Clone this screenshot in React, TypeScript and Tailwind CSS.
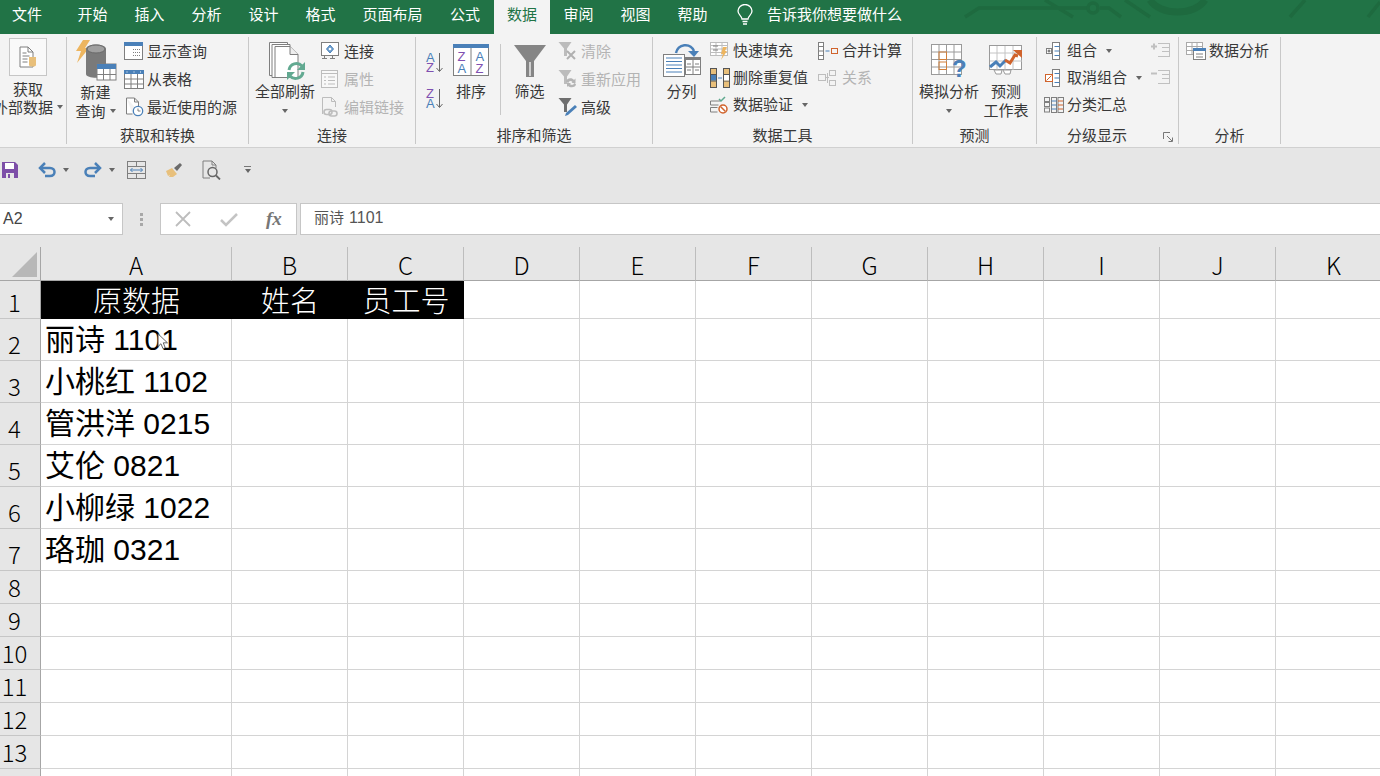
import type { ReactNode } from "react";

const G = "#7f7f7f";
const B = "#4a80b8";
const L = "#bdbdbd";

const tabs = [
  { t: "文件", w: "w-[54px] mr-[10px]" },
  { t: "开始", w: "w-[57px]" },
  { t: "插入", w: "w-[57px]" },
  { t: "分析", w: "w-[57px]" },
  { t: "设计", w: "w-[57px]" },
  { t: "格式", w: "w-[57px]" },
  { t: "页面布局", w: "w-[87px]" },
  { t: "公式", w: "w-[58px]" },
];
const tabs2 = ["审阅", "视图", "帮助"];
const cols = ["B", "C", "D", "E", "F", "G", "H", "I", "J", "K"];
const sheet = ["丽诗 1101", "小桃红 1102", "管洪洋 0215", "艾伦 0821", "小柳绿 1022", "珞珈 0321"];

function Caret() {
  return <span className="inline-block w-0 h-0 border-x-[3.5px] border-t-[4px] border-x-transparent border-t-[#666]" />;
}

function Row({ icon, text, off, caret, col = "w-[23px]", h = "h-[28px]", gap = "ml-[9px]" }: { icon: ReactNode; text: string; off?: boolean; caret?: boolean; col?: string; h?: string; gap?: string }) {
  return (
    <div className={`flex items-center whitespace-nowrap ${h} ${off ? "text-[#b4b4b4]" : ""}`}>
      <span className={`${col} flex items-center`}>{icon}</span>
      <span>{text}</span>
      {caret && <span className={`${gap} flex`}><Caret /></span>}
    </div>
  );
}

function Big({ icon, lines, caret, w, iconPad = "" }: { icon: ReactNode; lines: string[]; caret?: boolean; w: string; iconPad?: string }) {
  return (
    <div className={`${w} flex flex-col items-center whitespace-nowrap leading-[19px]`}>
      <div className={`h-[44px] w-full flex justify-center items-start ${iconPad}`}>{icon}</div>
      {lines.map((l) => <div key={l}>{l}</div>)}
      {caret && <div className="h-[21px] flex items-center"><Caret /></div>}
    </div>
  );
}

function Group({ w, label, children, launcher }: { w: string; label: string; children: ReactNode; launcher?: boolean }) {
  return (
    <div className={`${w} shrink-0 h-[107px] border-r border-[#c8c8c8] flex flex-col overflow-hidden`}>
      <div className="h-[89px] flex">{children}</div>
      {launcher ? (
        <div className="h-[18px] flex items-center">
          <div className="w-[120px] text-center leading-[18px]">{label}</div>
          <svg className="ml-[6px] mt-[4px]" width="10" height="10" viewBox="0 0 10 10" fill="none" stroke="#777"><path d="M.5 7V.5H7M4 4l5 5M5.500 9.500h4v-4" /></svg>
        </div>
      ) : (
        <div className="h-[18px] text-center leading-[18px]">{label}</div>
      )}
    </div>
  );
}

function MiniTable({ head = B, color = G }: { head?: string; color?: string }) {
  return (
    <svg width="20" height="19" viewBox="0 0 20 19" fill="#fff" stroke={color}>
      <rect x=".5" y=".5" width="19" height="18" />
      <rect x="0" y="0" width="20" height="4" fill={head} stroke="none" />
      <path d="M.5 9h19M.5 14h19M7 4v15M13.500 4v15" fill="none" />
      <path d="M3 1.500v1M10 1.500v1M16.500 1.500v1" stroke="#fff" fill="none" />
    </svg>
  );
}

function ShowQuery() {
  return (
    <svg width="19" height="18" viewBox="0 0 19 18" fill="#fff" stroke={G}>
      <rect x=".5" y=".5" width="18" height="17" />
      <rect x="0" y="0" width="19" height="4" fill={B} stroke="none" />
      <path d="M9 7.500h7M9 10.500h7M9 13.500h7" strokeDasharray="1 1" fill="none" />
    </svg>
  );
}

function RecentSrc() {
  return (
    <svg width="20" height="20" viewBox="0 0 20 20" fill="none">
      <path d="M2.500 1h8l4 4v9M2.500 1v16h6M10.500 1v4h4" stroke={G} fill="#fff" />
      <circle cx="14" cy="14" r="4.700" stroke={B} fill="#fff" strokeWidth="1.300" />
      <path d="M14 11.500V14h2.500" stroke={G} />
    </svg>
  );
}

function NewQuery() {
  return (
    <svg width="42" height="42" viewBox="0 0 42 42">
      <path d="M8 1h7l-5 8h4L2 24l4-12H1z" fill="#edb55f" />
      <path d="M11 10c0-6 20-6 20 0v25c0 5-20 5-20 0z" fill="#7a7a7a" />
      <ellipse cx="21" cy="10" rx="9" ry="4" fill="#a0a0a0" stroke="#6a6a6a" />
      <rect x="22" y="25" width="19" height="16" fill="#fff" stroke={G} />
      <rect x="22" y="25" width="19" height="5" fill={B} />
      <path d="M22 35.500h19M28.500 30v11M35 30v11" stroke={G} fill="none" />
    </svg>
  );
}

function Refresh() {
  return (
    <svg width="42" height="42" viewBox="0 0 42 42" fill="#fff" stroke={G}>
      <path d="M5.500 3.500h18v33h-18z" />
      <path d="M8 5.500h18v33H8z" />
      <path d="M11 7.500h15l8 8v23H11z" />
      <path d="M26 7.500v8h8" fill="#eee" />
      <path d="M25 31a7.500 7.500 0 0 1 13-4" fill="none" stroke="#62a991" strokeWidth="3" />
      <path d="M39 33a7.500 7.500 0 0 1-13 4" fill="none" stroke="#62a991" strokeWidth="3" />
      <path d="M41 23v8h-8zM23 41v-8h8z" fill="#62a991" stroke="none" />
    </svg>
  );
}

function Conn() {
  return (
    <svg width="18" height="18" viewBox="0 0 18 18" fill="none" stroke={G}>
      <rect x=".5" y=".5" width="17" height="13" fill="#fff" />
      <path d="M1 16.500h5M9 16.500h5M3.500 14v2.500M11.500 14v2.500" />
      <path d="M9 3l3.500 4L9 11 5.500 7z" fill="#6fa0cf" stroke={B} />
      <circle cx="9" cy="7" r="1.300" fill="#fff" stroke="none" />
    </svg>
  );
}

function Props() {
  return (
    <svg width="17" height="18" viewBox="0 0 17 18" fill="#f8f8f8" stroke={L}>
      <rect x=".5" y=".5" width="16" height="17" />
      <path d="M1 3.500h15M3 7h2M7 7h7M3 10.500h2M7 10.500h7M3 14h2M7 14h7" fill="none" />
    </svg>
  );
}

function EditLinks() {
  return (
    <svg width="18" height="20" viewBox="0 0 18 20" fill="none" stroke={L}>
      <path d="M1.500 17V.5h9l4 4V10M10.500.5v4h4" />
      <rect x="3" y="12.500" width="8" height="5" rx="2.500" strokeWidth="1.600" />
      <rect x="8" y="14" width="8" height="5" rx="2.500" strokeWidth="1.600" />
    </svg>
  );
}

function SortSmall({ top, bottom, topC, botC }: { top: string; bottom: string; topC: string; botC: string }) {
  return (
    <svg width="20" height="20" viewBox="0 0 20 20">
      <text x="1" y="10" fontSize="13" fontFamily="Liberation Sans, sans-serif" fill={topC}>{top}</text>
      <text x="1" y="20" fontSize="13" fontFamily="Liberation Sans, sans-serif" fill={botC}>{bottom}</text>
      <path d="M14.500 1v18M11.500 16l3 3.500 3-3.500" fill="none" stroke="#666" />
    </svg>
  );
}

function SortBig() {
  const f = "Liberation Sans, sans-serif";
  return (
    <svg width="36" height="32" viewBox="0 0 36 32">
      <rect x=".5" y=".5" width="35" height="31" fill="#fff" stroke={G} />
      <rect x="0" y="0" width="36" height="4" fill={B} />
      <path d="M18 4v28" stroke={G} />
      <text x="4.500" y="17" fontSize="13" fontFamily={f} fill="#7f50b0">Z</text>
      <text x="4.500" y="29" fontSize="13" fontFamily={f} fill={B}>A</text>
      <text x="22.500" y="17" fontSize="13" fontFamily={f} fill={B}>A</text>
      <text x="22.500" y="29" fontSize="13" fontFamily={f} fill="#7f50b0">Z</text>
    </svg>
  );
}

function Funnel() {
  return (
    <svg width="34" height="34" viewBox="0 0 34 34">
      <path d="M1 1h32L21 17v16h-8V17z" fill="#858585" />
      <path d="M16 18h2v14h-2z" fill="#d0d0d0" />
    </svg>
  );
}

function SmallFunnel({ kind }: { kind: "clear" | "re" | "adv" }) {
  const c = kind === "adv" ? "#6e6e6e" : "#bcbcbc";
  return (
    <svg width="20" height="20" viewBox="0 0 20 20" fill="none">
      <path d="M.5 1h13L9 7.500V15H6V7.500z" fill={c} />
      {kind === "clear" && <path d="M9 10l8 8M17 10l-8 8" stroke="#b0b0b0" strokeWidth="2" />}
      {kind === "re" && <path d="M8 13c0-4 6-5 8-2l1.500-1.500V14h-4l1-1c-1.500-2-4-1-4 1zM18 15c0 4-6 4-8 2l-1 1v-4h4l-1 1c1.500 1.500 4 1 4-1z" fill="#b4b4b4" />}
      {kind === "adv" && <path d="M17 8l2 2-9 8-3 1 1-3z" fill={B} />}
    </svg>
  );
}

function TextToCols() {
  return (
    <svg width="38" height="34" viewBox="0 0 38 34" fill="#fff">
      <rect x=".5" y="11.500" width="21" height="22" stroke={G} />
      <path d="M3 15h16M3 18.500h16M3 22h16M3 25.500h16M3 29h16" stroke={B} fill="none" />
      <rect x="22.500" y="14.500" width="15" height="17" stroke={G} />
      <rect x="22" y="14" width="16" height="3" fill={G} />
      <path d="M30 17v14M23 24h14M24 21h4M32 21h4M24 27h4M32 27h4" stroke={G} fill="none" />
      <path d="M13 10C15 1 27 -1 31 8" stroke={B} strokeWidth="2.500" fill="none" />
      <path d="M25 8h11l-5 6z" fill={B} />
    </svg>
  );
}

function Flash() {
  return (
    <svg width="18" height="18" viewBox="0 0 18 18" fill="#fff" stroke={L}>
      <rect x=".5" y=".5" width="17" height="13" />
      <path d="M1 3.500h16M1 7h16M1 10.500h16M6 1v13M12 1v13" fill="none" />
      <path d="M3 4h5M3 8h5" stroke={G} fill="none" />
      <path d="M13 5h4l-2 4h2l-6 9 2-6H11z" fill="#edb55f" stroke="none" />
    </svg>
  );
}

function Dupes() {
  return (
    <svg width="20" height="20" viewBox="0 0 20 20" stroke="#555">
      <rect x=".5" y=".5" width="6" height="19" fill="#e8bf7a" />
      <rect x="13.500" y=".5" width="6" height="19" fill="#e8bf7a" />
      <path d="M0 6.500h7M0 13h7M13 6.500h7M13 13h7" fill="none" />
      <rect x="1" y="7" width="5" height="5.500" fill={B} stroke="none" />
      <rect x="14" y="7" width="5" height="5.500" fill="#fff" stroke="none" />
      <path d="M8 10h4" stroke={B} />
    </svg>
  );
}

function Validate() {
  return (
    <svg width="18" height="18" viewBox="0 0 18 18" fill="none">
      <path d="M.5 5h10M.5 9h8M.5 5v4M.5 11.500h7M.5 16h7M.5 11.500V16" stroke={G} />
      <path d="M9 3l2 2 4-4" stroke="#5fa98f" strokeWidth="1.500" />
      <circle cx="13" cy="13" r="4" stroke="#d0632c" strokeWidth="1.500" fill="#fff" />
      <path d="M10.500 10.500l5 5" stroke="#d0632c" strokeWidth="1.500" />
    </svg>
  );
}

function Consol() {
  return (
    <svg width="20" height="18" viewBox="0 0 20 18" fill="none" stroke={G}>
      <rect x=".5" y=".5" width="5" height="17" fill="#fff" />
      <path d="M1 4.500h4M1 9h4M1 13.500h4" />
      <path d="M7.500 9h4" stroke={B} />
      <rect x="13.500" y="6.500" width="6" height="5" stroke="#d0632c" />
    </svg>
  );
}

function Relations() {
  return (
    <svg width="18" height="18" viewBox="0 0 18 18" fill="none" stroke={L}>
      <rect x=".5" y="5.500" width="7" height="6" />
      <rect x="11.500" y="1.500" width="6" height="5" />
      <rect x="11.500" y="11.500" width="6" height="5" />
      <path d="M8 8.500h3M9.500 4v10" />
    </svg>
  );
}

function WhatIf() {
  return (
    <svg width="36" height="38" viewBox="0 0 36 38" fill="none" stroke="#9a9a9a">
      <rect x=".5" y=".5" width="30" height="30" fill="#fff" />
      <path d="M8 1v30M15.500 1v30M23 1v30M1 8h30M1 15.500h30M1 23h30" />
      <rect x="8" y="8" width="7.500" height="7.500" stroke="#d0803c" />
      <rect x="8" y="18" width="7.500" height="7.500" stroke="#d0803c" />
      <text x="21" y="33" fontSize="24" fontWeight="700" fontFamily="Liberation Sans, sans-serif" fill={B} stroke="none">?</text>
    </svg>
  );
}

function Forecast() {
  return (
    <svg width="34" height="30" viewBox="0 0 34 30" fill="none">
      <rect x=".5" y=".5" width="32" height="24" fill="#fff" stroke="#9a9a9a" />
      <path d="M8 1v24M16 1v24M24 1v24M1 8h32M1 16h32" stroke="#c4c4c4" />
      <path d="M5 25h8l-1 4H7zM14 25h8l-1 4h-5z" stroke="#9a9a9a" fill="#fff" />
      <path d="M1 22l6-5 4 4 6-6" stroke={B} strokeWidth="3" />
      <path d="M16 15l5 3 5-8 3 1" stroke="#d0632c" strokeWidth="3" />
      <path d="M24 5h9v8z" fill="#d0632c" />
    </svg>
  );
}

function GroupIco({ un }: { un?: boolean }) {
  return (
    <svg width="18" height="18" viewBox="0 0 18 18" fill="none">
      <rect x="7.500" y=".5" width="7" height="17" stroke={G} fill="#fff" />
      <path d="M9.500 4.500h5M9.500 9h5M9.500 13.500h5" stroke={B} />
      {un ? (
        <>
          <rect x=".5" y="5.500" width="7" height="7" stroke="#d0632c" fill="#fff" />
          <path d="M1.500 11.500l5-5" stroke="#d0632c" />
        </>
      ) : (
        <>
          <rect x="1.500" y="6.500" width="5" height="5" stroke={G} fill="#fff" />
          <path d="M2.500 9h3M4 7.500v3" stroke="#555" />
        </>
      )}
    </svg>
  );
}

function Subtotal() {
  return (
    <svg className="-ml-[1px]" width="20" height="16" viewBox="0 0 20 16" fill="none" stroke={G}>
      <rect x=".5" y=".5" width="5" height="4" /><rect x=".5" y="5.500" width="5" height="4" /><rect x=".5" y="11" width="5" height="4" />
      <rect x="7.500" y=".5" width="5" height="15" /><rect x="14" y=".5" width="5.500" height="15" />
      <path d="M7.500 4h5M7.500 8h5M7.500 12h5" stroke={B} />
      <path d="M14 4h5M14 8h5M14 12h5" stroke="#d0632c" />
    </svg>
  );
}

function Outline({ plus }: { plus?: boolean }) {
  return (
    <svg width="19" height="16" viewBox="0 0 19 16" fill="none" stroke="#c0c0c0">
      <path d="M7 1.500h11M11 5.500h7M11 9.500h7M7 14.500h11" />
      <path d={plus ? "M0 4.500h6M3 1.500v6" : "M0 4.500h6"} strokeWidth="2" />
      <path d="M18.500 1v14" />
    </svg>
  );
}

function Analysis() {
  return (
    <svg width="20" height="18" viewBox="0 0 20 18" fill="#fff" stroke="#aaa">
      <rect x=".5" y=".5" width="16" height="12" />
      <path d="M1 4.500h15M1 8.500h15M6 1v12M11 1v12" fill="none" />
      <rect x="7.500" y="6.500" width="12" height="11" stroke={G} />
      <rect x="7" y="6" width="13" height="3" fill={B} stroke="none" />
      <path d="M10 12h7M10 15h7" stroke={G} fill="none" />
    </svg>
  );
}

function Bulb() {
  return (
    <svg width="16" height="22" viewBox="0 0 16 22" fill="none" stroke="#fff" strokeWidth="1.300">
      <path d="M5 15c0-3-4-4-4-8a7 6.500 0 0 1 14 0c0 4-4 5-4 8z" />
      <path d="M5.500 17.500h5M6 20h4" />
    </svg>
  );
}

function Cursor() {
  return (
    <svg className="absolute left-[116px] top-[14px]" width="12" height="17" viewBox="0 0 13 19">
      <path d="M1 1v14l3.200-3L6.500 17.500 9 16.500 6.800 11H11.500z" fill="#fff" stroke="#555" />
    </svg>
  );
}

export default function App() {
  return (
    <div className="w-[1380px] h-[776px] overflow-hidden bg-[#e6e6e6] text-[15px] text-[#383838] font-['Noto_Sans_CJK_SC','Noto_Sans',sans-serif]">
      {/* title tabs */}
      <div className="relative h-[34px] bg-[#217346] flex text-white leading-[28px]">
        <svg className="absolute inset-0" width="1380" height="34" viewBox="0 0 1380 34" fill="none" stroke="#1e6a3f" strokeWidth="3.500">
          <path d="M965 17l14-9h108M1100 8h9l12 9M1045 0l28 17M1125 0l25 17M1290 17l15-17M1368 17l12-15" />
          <circle cx="1093" cy="8" r="5" />
          <path d="M1150 0c10 16 45 16 55 0" strokeWidth="7" />
        </svg>
        {tabs.map((t) => <div key={t.t} className={`${t.w} relative text-center`}>{t.t}</div>)}
        <div className="relative w-[56px] bg-[#f3f3f3] text-[#217346] text-center">数据</div>
        {tabs2.map((t) => <div key={t} className="w-[57px] relative text-center">{t}</div>)}
        <div className="relative ml-[16px] flex">
          <span className="pt-[4px] w-[30px]"><Bulb /></span>
          <span>告诉我你想要做什么</span>
        </div>
      </div>

      {/* ribbon */}
      <div className="h-[114px] bg-[#f3f3f3] border-b border-[#d0d0d0] pt-[3px] flex">
        <Group w="w-[67px]" label="">
          <div className="w-[56px] flex flex-col items-center whitespace-nowrap leading-[18px]">
            <div className="h-[43px] flex items-start">
              <div className="w-[38px] h-[38px] mt-[1px] bg-[#f9f9f9] border border-[#c6c6c6] flex items-center justify-center">
                <svg width="18" height="22" viewBox="0 0 18 22" fill="#fff" stroke={G}>
                  <path d="M1 1h8l5 5v15H1z" />
                  <path d="M9 1v5h5M3.500 7h4M3.500 10h7M3.500 13h5M3.500 16h5" fill="none" />
                  <path d="M10 11h7v8c0 2-7 2-7 0z" fill="#e8bf7a" stroke="none" />
                </svg>
              </div>
            </div>
            <div>获取</div>
            <div className="flex items-center"><span>外部数据</span><span className="ml-[4px] flex"><Caret /></span></div>
          </div>
        </Group>

        <Group w="w-[182px]" label="获取和转换">
          <div className="w-[57px] flex flex-col items-center whitespace-nowrap leading-[19px]">
            <div className="h-[45px] mt-[2px] -mb-[2px]"><NewQuery /></div>
            <div>新建</div>
            <div className="flex items-center"><span>查询</span><span className="ml-[4px] flex"><Caret /></span></div>
          </div>
          <div>
            <Row icon={<ShowQuery />} text="显示查询" />
            <Row icon={<MiniTable />} text="从表格" />
            <Row icon={<RecentSrc />} text="最近使用的源" />
          </div>
        </Group>

        <Group w="w-[167px]" label="连接">
          <Big w="w-[72px]" icon={<Refresh />} lines={["全部刷新"]} caret iconPad="pt-[2px]" />
          <div>
            <Row icon={<Conn />} text="连接" />
            <Row icon={<Props />} text="属性" off />
            <Row icon={<EditLinks />} text="编辑链接" off />
          </div>
        </Group>

        <Group w="w-[237px]" label="排序和筛选">
          <div className="w-[34px] pl-[9px] pt-[15px] flex flex-col gap-[16px]">
            <SortSmall top="A" bottom="Z" topC={B} botC="#7f50b0" />
            <SortSmall top="Z" bottom="A" topC="#7f50b0" botC={B} />
          </div>
          <Big w="w-[42px]" icon={<SortBig />} lines={["排序"]} iconPad="pt-[7px]" />
          <div className="w-px h-[71px] mt-[7px] ml-[8px] bg-[#c8c8c8]" />
          <Big w="w-[57px]" icon={<Funnel />} lines={["筛选"]} iconPad="pt-[7px]" />
          <div>
            <Row icon={<SmallFunnel kind="clear" />} text="清除" off />
            <Row icon={<SmallFunnel kind="re" />} text="重新应用" off />
            <Row icon={<SmallFunnel kind="adv" />} text="高级" />
          </div>
        </Group>

        <Group w="w-[260px]" label="数据工具">
          <Big w="w-[57px]" icon={<TextToCols />} lines={["分列"]} iconPad="pt-[6px]" />
          <div className="w-[108px]">
            <Row h="h-[27px]" icon={<Flash />} text="快速填充" />
            <Row h="h-[27px]" icon={<Dupes />} text="删除重复值" />
            <Row h="h-[27px]" icon={<Validate />} text="数据验证" caret />
          </div>
          <div>
            <Row h="h-[27px]" col="w-[24px]" icon={<Consol />} text="合并计算" />
            <Row h="h-[27px]" col="w-[24px]" icon={<Relations />} text="关系" off />
          </div>
        </Group>

        <Group w="w-[124px]" label="预测">
          <Big w="w-[72px]" icon={<WhatIf />} lines={["模拟分析"]} caret iconPad="pt-[7px]" />
          <Big w="w-[42px]" icon={<Forecast />} lines={["预测", "工作表"]} iconPad="pt-[8px]" />
        </Group>

        <Group w="w-[142px]" label="分级显示" launcher>
          <div className="w-[114px] pl-[8px]">
            <Row h="h-[27px]" col="w-[22px]" icon={<GroupIco />} text="组合" caret />
            <Row h="h-[27px]" col="w-[22px]" icon={<GroupIco un />} text="取消组合" caret />
            <Row h="h-[27px]" col="w-[22px]" icon={<Subtotal />} text="分类汇总" />
          </div>
          <div className="pt-[5px] flex flex-col gap-[11px]">
            <Outline plus />
            <Outline />
          </div>
        </Group>

        <Group w="w-[102px]" label="分析">
          <div className="pl-[7px]">
            <Row h="h-[27px]" icon={<Analysis />} text="数据分析" />
          </div>
        </Group>
      </div>

      {/* quick access */}
      <div className="h-[55px] flex items-center pb-[12px]">
        <svg className="ml-[2px]" width="16" height="16" viewBox="0 0 16 16">
          <path d="M0 0h13l3 3v13H0z" fill="#7d4fa8" />
          <path d="M3 1h9v6H3z" fill="#fff" />
          <path d="M4 11h8v5H4z" fill="#e6e6e6" />
          <path d="M6 12h2v4H6z" fill="#7d4fa8" />
        </svg>
        <svg className="ml-[20px]" width="18" height="16" viewBox="0 0 18 16" fill="none" stroke={B} strokeWidth="2.500">
          <path d="M3 6h9c6 0 6 8 0 8H7" />
          <path d="M7 1L2 6l5 5" />
        </svg>
        <span className="ml-[7px] flex"><Caret /></span>
        <svg className="ml-[15px]" width="18" height="16" viewBox="0 0 18 16" fill="none" stroke={B} strokeWidth="2.500">
          <path d="M15 6H6c-6 0-6 8 0 8h5" />
          <path d="M11 1l5 5-5 5" />
        </svg>
        <span className="ml-[7px] flex"><Caret /></span>
        <svg className="ml-[12px]" width="19" height="18" viewBox="0 0 19 18" fill="none" stroke={G}>
          <rect x=".5" y=".5" width="18" height="17" />
          <path d="M1 5.500h17M1 12.500h17M9.500 1v4M9.500 13v4" />
          <path d="M3.500 9h12M5.500 7l-2 2 2 2M13.500 7l2 2-2 2" stroke={B} />
        </svg>
        <svg className="ml-[19px]" width="18" height="16" viewBox="0 0 18 16">
          <path d="M1 9l6-3 5 6-4 3H4l1-2-2 1z" fill="#e8c07c" />
          <path d="M9 6l6-5 2 2-5 6z" fill="#6b6b6b" />
        </svg>
        <svg className="ml-[19px]" width="19" height="20" viewBox="0 0 19 20" fill="none" stroke={G}>
          <path d="M8 18H1V1h9l4 4v3M10 1v4h4" />
          <circle cx="10.500" cy="12" r="4.500" stroke="#666" strokeWidth="1.500" />
          <path d="M14 15.500l4 4" stroke="#666" strokeWidth="1.800" />
        </svg>
        <span className="ml-[23px] flex flex-col items-center gap-[2px]">
          <span className="w-[7px] h-px bg-[#777]" />
          <Caret />
        </span>
      </div>

      {/* formula bar */}
      <div className="h-[32px] mb-[12px] flex">
        <div className="w-[123px] bg-white border border-l-0 border-[#c6c6c6] flex items-center justify-between pl-[3px] pr-[8px]">
          <span className="text-[16px] font-['Liberation_Sans',sans-serif] text-[#444]">A2</span>
          <Caret />
        </div>
        <div className="w-[37px] flex flex-col items-center justify-center gap-[2px]">
          <span className="w-[3px] h-[3px] bg-[#a8a8a8]" />
          <span className="w-[3px] h-[3px] bg-[#a8a8a8]" />
          <span className="w-[3px] h-[3px] bg-[#a8a8a8]" />
        </div>
        <div className="w-[137px] bg-white border border-[#c6c6c6] flex items-center pl-[14px]">
          <svg width="16" height="16" viewBox="0 0 16 16" fill="none" stroke="#bdbdbd" strokeWidth="1.800"><path d="M1 1l14 14M15 1L1 15" /></svg>
          <svg className="ml-[29px]" width="18" height="15" viewBox="0 0 18 15" fill="none" stroke="#c4c4c4" strokeWidth="2.500"><path d="M1 8l5 5L17 2" /></svg>
          <span className="ml-[28px] text-[#777] text-[19px] italic font-bold font-['Liberation_Serif',serif]">fx</span>
        </div>
        <div className="ml-[3px] flex-1 bg-white border border-r-0 border-[#c6c6c6] flex items-center pl-[13px] pb-[2px] text-[15px] text-[#555] font-['Liberation_Sans','Noto_Sans_CJK_SC',sans-serif]">
          丽诗<span className="text-[16px] ml-[5px]">1101</span>
        </div>
      </div>

      {/* sheet */}
      <div className="grid grid-cols-[41px_191px_repeat(10,116px)] grid-rows-[34px_38px_repeat(6,42px)_repeat(7,33px)] bg-white text-black text-[29px]">
        <div className="bg-[#e6e6e6] border-r border-b border-[#a6a6a6] flex items-end justify-end pr-[3px] pb-[3px]">
          <span className="w-0 h-0 border-l-[25px] border-b-[25px] border-l-transparent border-b-[#b8b8b8]" />
        </div>
        <ColHead c="A" />
        {cols.map((c) => <ColHead key={c} c={c} />)}

        <RowHead n={1} />
        <div className="bg-black text-white font-light leading-none pb-[2px] flex items-center justify-center">原数据</div>
        <div className="bg-black text-white font-light leading-none pb-[2px] flex items-center justify-center">姓名</div>
        <div className="bg-black text-white font-light leading-none pb-[2px] flex items-center justify-center">员工号</div>
        {cols.slice(2).map((c) => <Cell key={c} />)}

        {sheet.map((s, i) => (
          <Line key={s} n={i + 2}>
            <div className="relative border-r border-b border-[#d4d4d4] flex items-center pl-[4px] pt-[1px] text-[30px] whitespace-nowrap leading-none font-['Liberation_Sans','Noto_Sans_CJK_SC',sans-serif]">
              {s}
              {i === 0 && <Cursor />}
            </div>
          </Line>
        ))}
        {[8, 9, 10, 11, 12, 13].map((n) => (
          <Line key={n} n={n}>
            <Cell />
          </Line>
        ))}
        <Line>
          <Cell />
        </Line>
      </div>
    </div>
  );
}

function ColHead({ c }: { c: string }) {
  return (
    <div className="bg-[#e6e6e6] border-r border-b border-r-[#bdbdbd] border-b-[#a6a6a6] text-[24px] font-light leading-none pt-[2px] flex items-center justify-center text-black">{c}</div>
  );
}

function RowHead({ n }: { n?: number }) {
  return (
    <div className="bg-[#e6e6e6] border-r border-b border-r-[#a6a6a6] border-b-[#c6c6c6] flex items-end justify-center pr-[11px] text-[24px] font-light leading-[32px] text-black">{n}</div>
  );
}

function Cell() {
  return <div className="border-r border-b border-[#d4d4d4]" />;
}

function Line({ n, children }: { n?: number; children: ReactNode }) {
  return (
    <>
      <RowHead n={n} />
      {children}
      {cols.map((c) => <Cell key={c} />)}
    </>
  );
}
